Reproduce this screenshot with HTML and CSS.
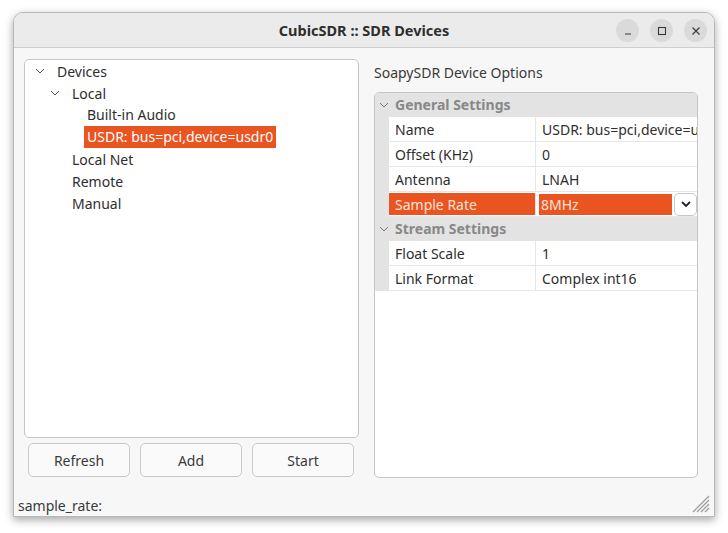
FILE: index.html
```html
<!DOCTYPE html>
<html>
<head>
<meta charset="utf-8">
<link rel="stylesheet" href="styles.css">
</head>
<body>
<div class="window">
  <div class="titlebar">
    <div class="title">CubicSDR :: SDR Devices</div>
    <div class="controls">
      <span class="ctl"><svg width="10" height="10" viewBox="0 0 10 10"><line x1="2" y1="8" x2="8" y2="8" stroke="#3a3a3a" stroke-width="1.2"/></svg></span>
      <span class="ctl"><svg width="10" height="10" viewBox="0 0 10 10"><rect x="1.5" y="1.5" width="7" height="7" fill="none" stroke="#3a3a3a" stroke-width="1.1"/></svg></span>
      <span class="ctl"><svg width="10" height="10" viewBox="0 0 10 10"><path d="M1.5 1.5 L8.5 8.5 M8.5 1.5 L1.5 8.5" stroke="#3a3a3a" stroke-width="1.2"/></svg></span>
    </div>
  </div>
  <div class="content">
    <div class="left">
      <div class="tree">
        <div class="node l0"><svg class="chev" width="10" height="6" viewBox="0 0 10 6"><polyline points="1,1 5,5 9,1" fill="none" stroke="#555" stroke-width="1"/></svg><span>Devices</span></div>
        <div class="node l1"><svg class="chev" width="10" height="6" viewBox="0 0 10 6"><polyline points="1,1 5,5 9,1" fill="none" stroke="#555" stroke-width="1"/></svg><span>Local</span></div>
        <div class="node l2"><span>Built-in Audio</span></div>
        <div class="node l2"><span class="sel">USDR: bus=pci,device=usdr0</span></div>
        <div class="node l1b"><span>Local Net</span></div>
        <div class="node l1b"><span>Remote</span></div>
        <div class="node l1b"><span>Manual</span></div>
      </div>
      <div class="buttons">
        <button class="btn">Refresh</button>
        <button class="btn">Add</button>
        <button class="btn">Start</button>
      </div>
    </div>
    <div class="right">
      <div class="heading">SoapySDR Device Options</div>
      <div class="grid">
        <div class="cat"><svg class="chev" width="10" height="6" viewBox="0 0 10 6"><polyline points="1,1 5,5 9,1" fill="none" stroke="#777" stroke-width="1"/></svg><span>General Settings</span></div>
        <div class="row"><div class="k">Name</div><div class="v">USDR: bus=pci,device=usdr0</div></div>
        <div class="row"><div class="k">Offset (KHz)</div><div class="v">0</div></div>
        <div class="row"><div class="k">Antenna</div><div class="v">LNAH</div></div>
        <div class="row active"><div class="k">Sample Rate</div><div class="v"><span class="edit">8MHz</span><span class="dd"><svg width="12" height="8" viewBox="0 0 12 8"><polyline points="2,2 6,6 10,2" fill="none" stroke="#222" stroke-width="1.8"/></svg></span></div></div>
        <div class="cat"><svg class="chev" width="10" height="6" viewBox="0 0 10 6"><polyline points="1,1 5,5 9,1" fill="none" stroke="#777" stroke-width="1"/></svg><span>Stream Settings</span></div>
        <div class="row"><div class="k">Float Scale</div><div class="v">1</div></div>
        <div class="row"><div class="k">Link Format</div><div class="v">Complex int16</div></div>
      </div>
    </div>
  </div>
  <div class="status">
    <span>sample_rate:</span>
    <svg class="grip" width="18" height="18" viewBox="0 0 18 18"><path d="M17 5 L5 17 M17 9 L9 17 M17 13 L13 17 M17 1 L1 17" stroke="#9a9a9a" stroke-width="1.2"/></svg>
  </div>
</div>
</body>
</html>
```

FILE: styles.css
```css
* { box-sizing: border-box; }
html, body { margin: 0; padding: 0; }
body {
  background: #ffffff;
  font-family: "Noto Sans", "Open Sans", sans-serif;
  font-size: 14px;
  color: #2e2e2e;
  width: 728px;
  height: 533px;
  overflow: hidden;
}
.window {
  margin: 12px 0 0 13px;
  width: 702px;
  height: 505px;
  border: 1px solid #b8b8b8;
  border-radius: 10px 10px 0 0;
  background: #f7f7f7;
  box-shadow: 0 3px 8px rgba(0,0,0,0.35);
  display: flex;
  flex-direction: column;
  overflow: hidden;
}
.titlebar {
  height: 35px;
  flex: none;
  background: #ebebeb;
  border-bottom: 1px solid #cfcfcf;
  position: relative;
  display: flex;
  align-items: center;
  justify-content: center;
}
.title {
  font-weight: bold;
  font-size: 14.5px;
  color: #2e2e2e;
}
.controls {
  position: absolute;
  right: 7px;
  top: 6px;
  display: flex;
  gap: 11px;
}
.ctl {
  width: 23px;
  height: 23px;
  border-radius: 50%;
  background: #dadada;
  display: flex;
  align-items: center;
  justify-content: center;
}
.content {
  display: flex;
  gap: 15px;
  padding: 11px 16px 0 10px;
  height: 430px;
  flex: none;
}
.left {
  width: 335px;
  display: flex;
  flex-direction: column;
}
.tree {
  height: 379px;
  background: #fff;
  border: 1px solid #c6c6c6;
  border-radius: 5px;
  padding: 0;
}
.node {
  height: 22px;
  display: flex;
  align-items: center;
  white-space: nowrap;
}
.node .chev { margin-right: 12px; }
.l0 { padding-left: 10px; }
.l1 { padding-left: 25px; }
.l1b { padding-left: 47px; }
.l2 { padding-left: 59px; }
.l2 span { padding: 0 3px; line-height: 22px; }
.sel {
  background: #e95420;
  color: #fff;
}
.buttons {
  display: flex;
  gap: 10px;
  padding: 5px 5px 0 4px;
}
.btn {
  flex: 1;
  height: 34px;
  font-family: inherit;
  font-size: 14px;
  color: #3a3a3a;
  background: #fafafa;
  border: 1px solid #c9c9c9;
  border-radius: 5px;
}
.right {
  width: 324px;
  display: flex;
  flex-direction: column;
}
.heading {
  height: 33px;
  padding-top: 4px;
  color: #3a3a3a;
}
.grid {
  height: 386px;
  background: #fff;
  border: 1px solid #c6c6c6;
  border-radius: 5px;
  overflow: hidden;
}
.cat {
  height: 24px;
  background: #e3e3e3;
  display: flex;
  align-items: center;
  padding-left: 4px;
  padding-bottom: 1px;
  color: #888;
  font-weight: bold;
}
.cat .chev { margin-right: 6px; }
.row {
  height: 25px;
  display: flex;
  border-left: 14px solid #e3e3e3;
  border-bottom: 1px solid #e6e6e6;
}
.k {
  width: 147px;
  border-right: 1px solid #e6e6e6;
  padding-left: 6px;
  display: flex;
  align-items: center;
}
.v {
  flex: 1;
  padding-left: 6px;
  display: flex;
  align-items: center;
  white-space: nowrap;
  overflow: hidden;
}
.active .k {
  background: #e95420;
  color: #fce3d8;
  margin: 1px 0;
}
.active .v { padding-left: 3px; }
.edit {
  background: #e95420;
  color: #fce3d8;
  width: 133px;
  height: 21px;
  display: flex;
  align-items: center;
  padding-left: 2px;
}
.dd {
  margin-left: 2px;
  width: 23px;
  height: 23px;
  background: #fff;
  border: 1px solid #c6c6c6;
  border-radius: 5px;
  display: flex;
  align-items: center;
  justify-content: center;
}
.status {
  flex: 1;
  display: flex;
  align-items: flex-end;
  justify-content: space-between;
  padding: 0 4px 1px 4px;
  color: #3a3a3a;
}
.grip { margin-bottom: 2px; }
```
